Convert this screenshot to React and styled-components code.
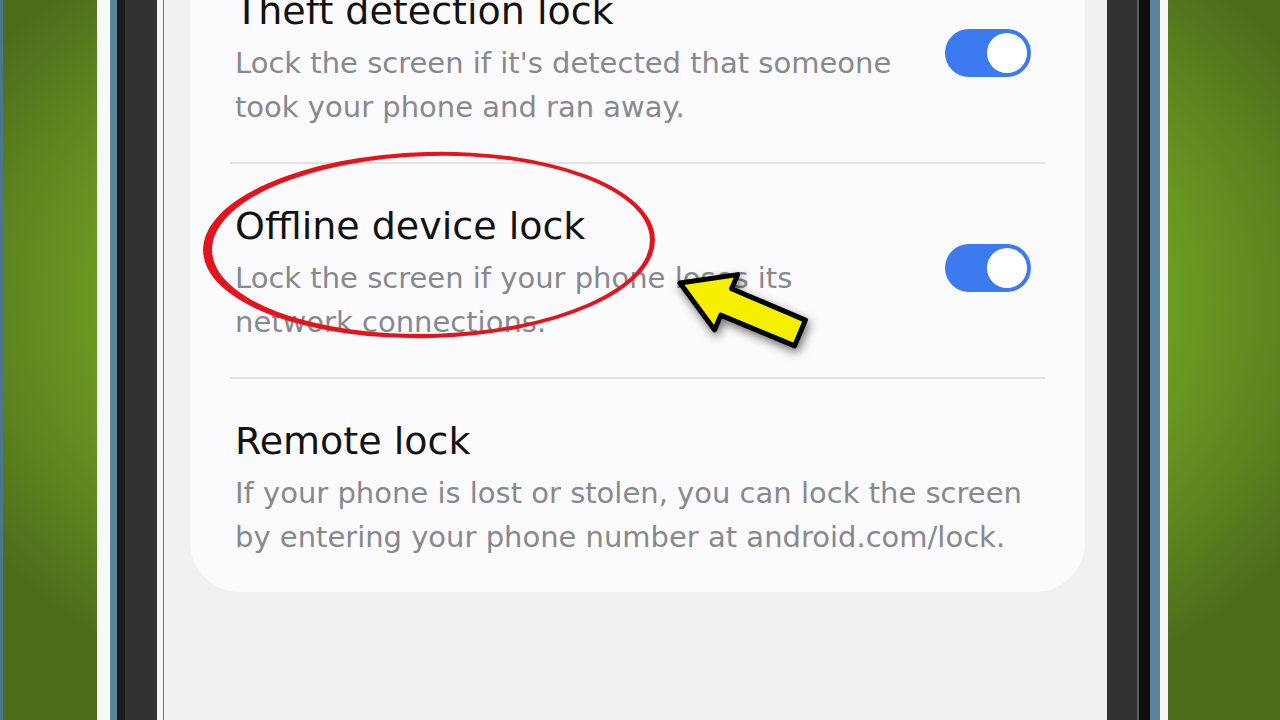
import React from 'react';
import styled, { createGlobalStyle } from 'styled-components';

const GlobalStyle = createGlobalStyle`
  html, body {
    margin: 0;
    padding: 0;
    overflow: hidden;
  }
  body {
    font-family: "DejaVu Sans", "Noto Sans", sans-serif;
    -webkit-font-smoothing: antialiased;
  }
`;

const Stage = styled.div`
  position: relative;
  box-sizing: border-box;
  width: 1280px;
  height: 720px;
  display: flex;
  border-left: 3px solid #4d7590;
  padding: 0 112px 0 94px;
  background: radial-gradient(ellipse 760px 480px at 50% 42%, #84bc2c 0%, #6d9f23 68%, #4c6c1b 100%);
`;

const PhoneEdge = styled.div`
  flex: 1;
  display: flex;
  border-left: 13px solid #f7f9f6;
  border-right: 8px solid #f7f9f6;
`;

const Rim = styled.div`
  flex: 1;
  display: flex;
  border-left: 7px solid #5b8399;
  border-right: 10px solid #5b8399;
`;

const Bezel = styled.div`
  flex: 1;
  display: flex;
  padding: 0 43px 0 40px;
  background: linear-gradient(
    to right,
    #1b1b1b 0 8px,
    #323232 8px calc(100% - 13px),
    #5c5c5c calc(100% - 13px) calc(100% - 11px),
    #0f0f0f calc(100% - 11px)
  );
`;

const Screen = styled.div`
  flex: 1;
  overflow: hidden;
  background: #f1f1f3;
  padding: 0 22px 0 33px;
  box-shadow: inset 6px 0 0 #f4f6f1, inset 7px 0 0 #6f7d52;
`;

const Card = styled.div`
  margin-top: -51px;
  background: #fbfbfd;
  border-radius: 50px;
  padding: 0 40px;
`;

const Row = styled.div`
  display: flex;
  align-items: center;
  padding: 39px 14px 33px 5px;
  border-bottom: ${({ last }) => (last ? 'none' : '2px solid #e3e3e6')};
`;

const TextBlock = styled.div`
  flex: 1;
  display: flex;
  flex-direction: column;
`;

const Title = styled.div`
  font-size: 38px;
  line-height: 46px;
  color: #121212;
`;

const Desc = styled.div`
  margin-top: 7px;
  font-size: 29px;
  line-height: 44px;
  color: #88898d;
  white-space: pre-line;
`;

const Toggle = styled.div`
  flex: none;
  width: 86px;
  height: 48px;
  margin-bottom: 11px;
  border-radius: 24px;
  background: #3b7bef;
  display: flex;
  align-items: center;
  justify-content: ${({ on }) => (on ? 'flex-end' : 'flex-start')};
  padding: 0 4px;
  box-sizing: border-box;
`;

const Knob = styled.div`
  width: 40px;
  height: 40px;
  border-radius: 50%;
  background: #ffffff;
`;

const Marks = styled.svg`
  position: absolute;
  inset: 0;
  width: 1280px;
  height: 720px;
  pointer-events: none;
`;

const settings = [
  {
    title: 'Theft detection lock',
    desc: "Lock the screen if it's detected that someone\ntook your phone and ran away.",
    toggle: true,
  },
  {
    title: 'Offline device lock',
    desc: 'Lock the screen if your phone loses its\nnetwork connections.',
    toggle: true,
  },
  {
    title: 'Remote lock',
    desc: 'If your phone is lost or stolen, you can lock the screen\nby entering your phone number at android.com/lock.',
    toggle: false,
  },
];

export default function App() {
  return (
    <>
      <GlobalStyle />
      <Stage>
        <PhoneEdge>
          <Rim>
            <Bezel>
              <Screen>
                <Card>
                  {settings.map((s, i) => (
                    <Row key={s.title} last={i === settings.length - 1}>
                      <TextBlock>
                        <Title>{s.title}</Title>
                        <Desc>{s.desc}</Desc>
                      </TextBlock>
                      {s.toggle && (
                        <Toggle on>
                          <Knob />
                        </Toggle>
                      )}
                    </Row>
                  ))}
                </Card>
              </Screen>
            </Bezel>
          </Rim>
        </PhoneEdge>

        {/* hand-drawn circle and pointer */}
        <Marks viewBox="0 0 1280 720">
          <defs>
            <filter id="arrowShadow" x="-30%" y="-30%" width="160%" height="160%">
              <feDropShadow dx="2" dy="4" stdDeviation="5" floodColor="#000" floodOpacity="0.55" />
            </filter>
          </defs>
          <path
            fillRule="evenodd"
            fill="#e3141c"
            d="M200 245 a226 93 0 1 0 452 0 a226 93 0 1 0 -452 0 Z
               M209 245 a219 89 0 1 0 438 0 a219 89 0 1 0 -438 0 Z"
            transform="rotate(-1.5 426 245)"
          />
          <polygon
            points="677,283 734.7,274.6 728.6,288.8 802.4,320.1 791.6,345.9 717.8,315.1 711.6,329.9"
            fill="#f6ef00"
            stroke="#000"
            strokeWidth="5"
            strokeLinejoin="round"
            filter="url(#arrowShadow)"
          />
        </Marks>
      </Stage>
    </>
  );
}
